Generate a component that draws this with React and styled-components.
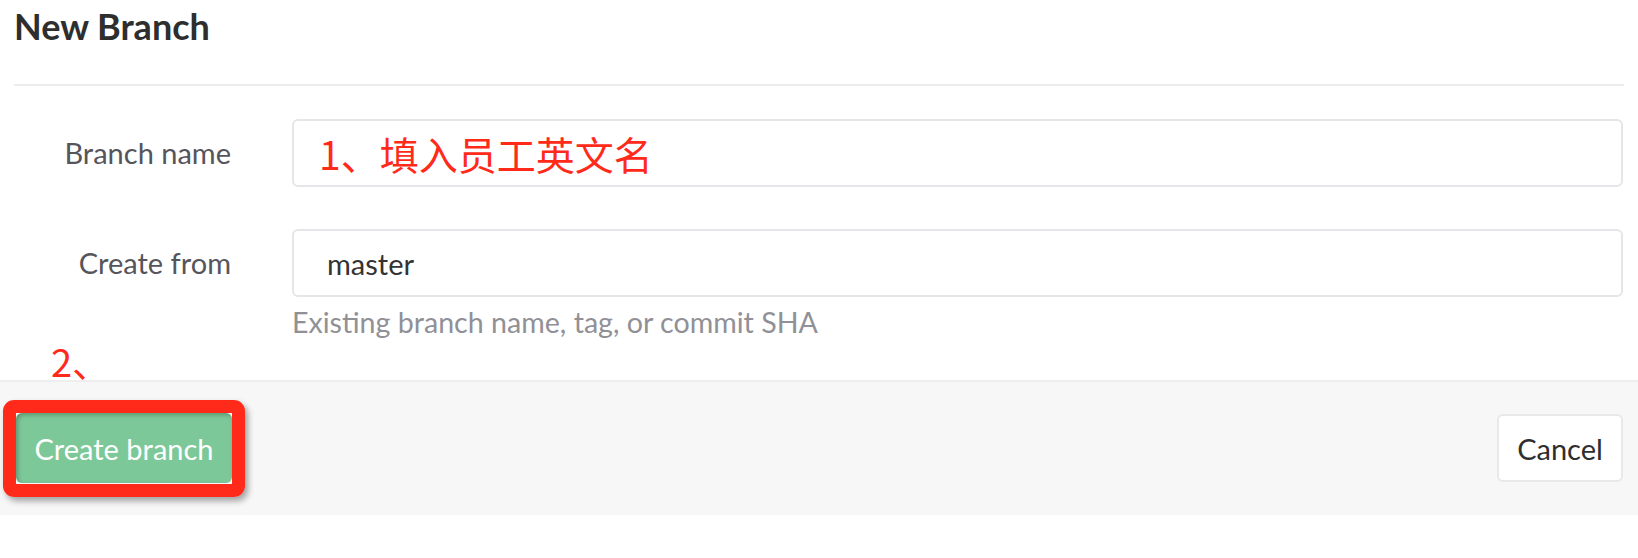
import React from 'react';
import styled, { createGlobalStyle } from 'styled-components';

const GlobalStyle = createGlobalStyle`
  body {
    margin: 0;
    background: #fff;
    font-family: 'Lato', 'Noto Sans', sans-serif;
  }
`;

const Page = styled.div`
  width: 1638px;
  position: relative;
`;

const Header = styled.div`
  margin: 0 14px 0 14px;
  padding-top: 4px;
  border-bottom: 2px solid #ececec;
  height: 86px;
  box-sizing: border-box;
`;

const Title = styled.h3`
  margin: 0;
  font-size: 36px;
  line-height: 44px;
  font-weight: 700;
  color: #2e2e2e;
`;

const Form = styled.div`
  padding: 33px 15px 41px 14px;
  display: flex;
  flex-direction: column;
  gap: 42px;
`;

const Row = styled.div`
  display: grid;
  grid-template-columns: 217px 1fr;
  column-gap: 61px;
  align-items: start;
`;

const Label = styled.label`
  text-align: right;
  font-size: 29px;
  line-height: 68px;
  color: #55555b;
`;

const Field = styled.div`
  display: flex;
  flex-direction: column;
`;

const Input = styled.input`
  height: 68px;
  box-sizing: border-box;
  border: 2px solid #e6e6ea;
  border-radius: 6px;
  padding: 0 ${(p) => (p.$annotation ? '25px' : '33px')};
  font-family: ${(p) => (p.$annotation ? "'Noto Sans CJK SC', sans-serif" : "'Lato', sans-serif")};
  font-size: ${(p) => (p.$annotation ? '39px' : '29px')};
  color: ${(p) => (p.$annotation ? '#ff2a1a' : '#333')};
  background: #fff;
  outline: none;
`;

const Help = styled.div`
  margin-top: 8px;
  font-size: 28.6px;
  line-height: 34px;
  color: #909096;
`;

const Footer = styled.div`
  border-top: 2px solid #eeeeee;
  background: #f7f7f7;
  padding: 31px 15px 32px 16px;
  display: flex;
  justify-content: space-between;
  align-items: center;
`;

const Marked = styled.div`
  position: relative;
  &::after {
    content: '';
    position: absolute;
    inset: -13px -13px -14px -13px;
    border: 13px solid #ff2a1a;
    border-radius: 11px;
    box-shadow: 3px 4px 6px rgba(0, 0, 0, 0.35);
    pointer-events: none;
  }
`;

const Button = styled.button`
  height: ${(p) => (p.$primary ? '70px' : '68px')};
  padding: 0;
  box-sizing: border-box;
  border-radius: 6px;
  font-family: 'Lato', sans-serif;
  font-size: 29px;
  cursor: pointer;
  background: ${(p) => (p.$primary ? '#7dc899' : '#fff')};
  color: ${(p) => (p.$primary ? '#fff' : '#2e2e2e')};
  border: ${(p) => (p.$primary ? 'none' : '2px solid #e9e9ec')};
  box-shadow: ${(p) => (p.$primary ? 'inset 2px 2px 4px rgba(0, 0, 0, 0.25)' : 'none')};
  width: ${(p) => (p.$primary ? '216px' : '126px')};
`;

const Note = styled.span`
  position: absolute;
  left: 51px;
  top: 341px;
  font-family: 'Noto Sans CJK SC', sans-serif;
  font-size: 38px;
  line-height: 40px;
  color: #ff2a1a;
`;

export default function App() {
  return (
    <>
      <GlobalStyle />
      <Page>
        <Header>
          <Title>New Branch</Title>
        </Header>
        <Form>
          <Row>
            <Label>Branch name</Label>
            <Input $annotation defaultValue="1、填入员工英文名" />
          </Row>
          <Row>
            <Label>Create from</Label>
            <Field>
              <Input defaultValue="master" />
              <Help>Existing branch name, tag, or commit SHA</Help>
            </Field>
          </Row>
        </Form>
        <Note>2、</Note>
        <Footer>
          <Marked>
            <Button $primary>Create branch</Button>
          </Marked>
          <Button>Cancel</Button>
        </Footer>
      </Page>
    </>
  );
}
